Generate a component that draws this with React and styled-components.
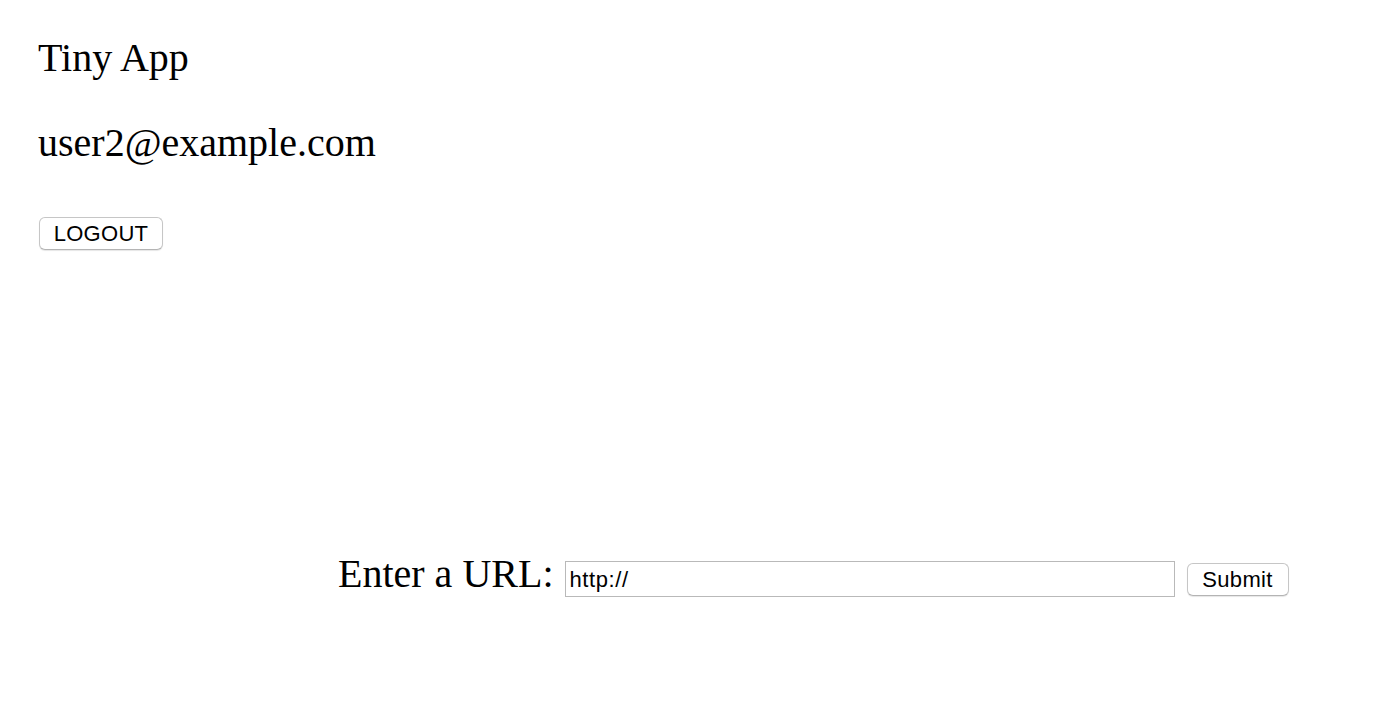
import React from "react";
import styled, { createGlobalStyle } from "styled-components";

const Global = createGlobalStyle`
  html, body { margin: 0; padding: 0; background: #ffffff; }
  body { font-family: "Liberation Serif", "Times New Roman", serif; color: #000; }
`;

const Page = styled.div`
  width: 1382px;
  min-height: 706px;
  box-sizing: border-box;
  padding: 35px 0 0 38px;
`;

const Header = styled.header`
  display: flex;
  flex-direction: column;
  align-items: flex-start;
`;

const Title = styled.div`
  font-size: 40px;
  line-height: 46px;
`;

const Email = styled.div`
  font-size: 40px;
  line-height: 46px;
  margin-top: 39px;
`;

const NativeButton = styled.button`
  font-family: "Liberation Sans", Arial, sans-serif;
  font-size: 22px;
  letter-spacing: 0.3px;
  color: #000;
  background: #fff;
  border: 1px solid #c6c6c6;
  border-bottom-color: #b4b4b4;
  border-radius: 6px;
  box-shadow: 0 1px 1px rgba(0, 0, 0, 0.1);
  height: ${(p) => p.$h}px;
  width: ${(p) => p.$w}px;
  padding: 0;
  margin-left: ${(p) => p.$ml || 0}px;
  margin-top: ${(p) => p.$mt || 0}px;
  line-height: 1;
  cursor: default;
`;

const Form = styled.form`
  display: flex;
  align-items: flex-start;
  margin-top: 301px;
  margin-left: 300px;
`;

const Label = styled.label`
  font-size: 40px;
  line-height: 46px;
`;

const UrlInput = styled.input`
  box-sizing: border-box;
  width: 610px;
  height: 36px;
  margin: 10px 0 0 11px;
  border: 1px solid #b9b9b9;
  padding: 2px 4px 0;
  font-family: "Liberation Sans", Arial, sans-serif;
  font-size: 22px;
  letter-spacing: 0.6px;
  color: #000;
  outline: none;
`;

export default function App() {
  return (
    <>
      <Global />
      <Page>
        <Header>
          <Title>Tiny App</Title>
          <Email>user2@example.com</Email>
          <NativeButton $w={124} $h={33} $ml={1} $mt={51}>LOGOUT</NativeButton>
        </Header>
        <Form onSubmit={(e) => e.preventDefault()}>
          <Label>Enter a URL:</Label>
          <UrlInput defaultValue="http://" />
          <NativeButton type="submit" $w={102} $h={33} $ml={12} $mt={12}>Submit</NativeButton>
        </Form>
      </Page>
    </>
  );
}
